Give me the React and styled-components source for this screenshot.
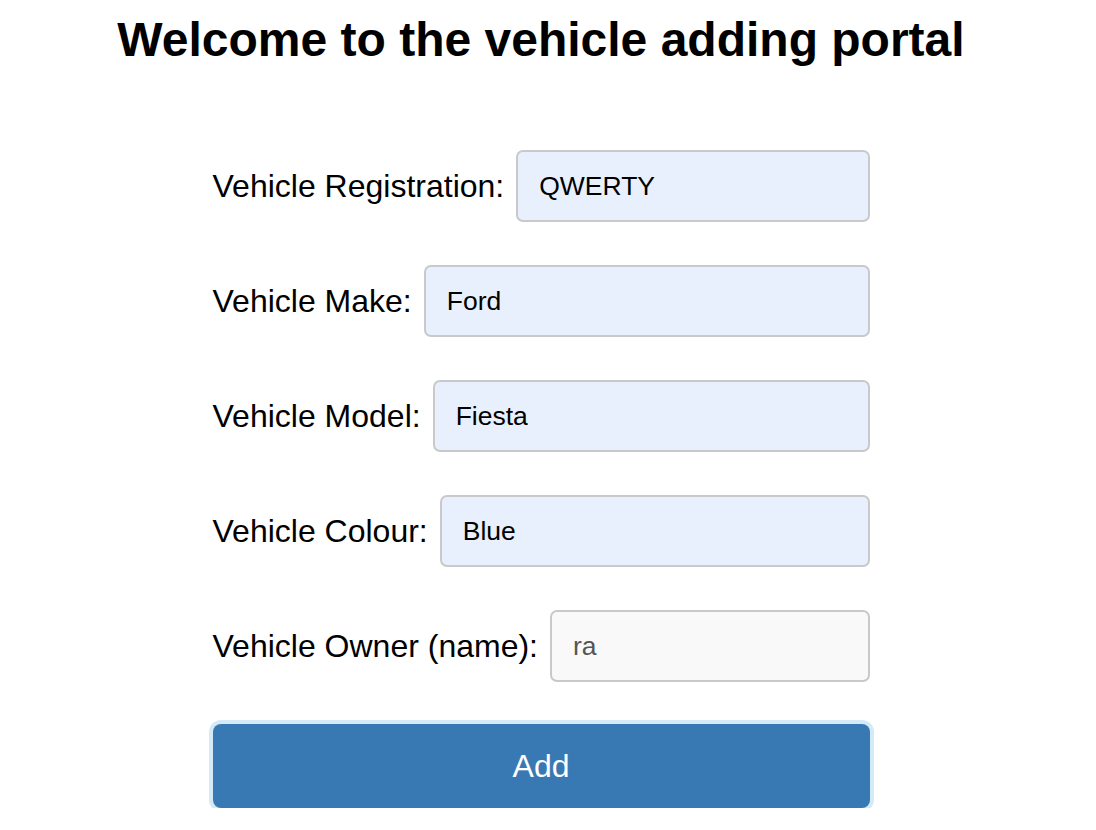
import React, { useState } from 'react';
import styled, { createGlobalStyle } from 'styled-components';

const GlobalStyle = createGlobalStyle`
  body {
    margin: 0;
    background: #ffffff;
    font-family: "Liberation Sans", Arial, sans-serif;
    color: #000;
  }
`;

const Page = styled.div`
  width: 1082px;
  display: flex;
  flex-direction: column;
  align-items: center;
`;

const Title = styled.h1`
  margin: 13px 0 0;
  font-size: 48px;
  font-weight: bold;
  line-height: 54px;
`;

const Form = styled.form`
  width: 657px;
  margin-top: 83px;
  display: flex;
  flex-direction: column;
  gap: 43px;
`;

const Row = styled.div`
  display: flex;
  align-items: center;
  gap: 12px;
`;

const Label = styled.label`
  font-size: 32px;
  white-space: nowrap;
`;

const Input = styled.input`
  flex: 1;
  min-width: 0;
  height: 72px;
  box-sizing: border-box;
  padding: 0 21px;
  border: 2px solid #c9c9cc;
  border-radius: 7px;
  background: ${(p) => (p.$filled ? '#e8f0fe' : '#f9f9f9')};
  color: ${(p) => (p.$filled ? '#000' : '#555')};
  font-family: "Liberation Sans", Arial, sans-serif;
  font-size: 26.5px;
  outline: none;
`;

const Button = styled.button`
  height: 84px;
  margin-top: -1px;
  border: none;
  border-radius: 8px;
  background: #3879b4;
  color: #fff;
  font-family: "Liberation Sans", Arial, sans-serif;
  font-size: 32px;
  box-shadow: 0 0 0 4px #d4ebf7;
  cursor: pointer;
`;

const fields = [
  { id: 'reg', label: 'Vehicle Registration:', value: 'QWERTY', filled: true },
  { id: 'make', label: 'Vehicle Make:', value: 'Ford', filled: true },
  { id: 'model', label: 'Vehicle Model:', value: 'Fiesta', filled: true },
  { id: 'colour', label: 'Vehicle Colour:', value: 'Blue', filled: true },
  { id: 'owner', label: 'Vehicle Owner (name):', value: 'ra', filled: false },
];

const App = () => {
  const [values, setValues] = useState(
    Object.fromEntries(fields.map((f) => [f.id, f.value]))
  );

  return (
    <Page>
      <GlobalStyle />
      <Title>Welcome to the vehicle adding portal</Title>
      <Form onSubmit={(e) => e.preventDefault()}>
        {fields.map((f) => (
          <Row key={f.id}>
            <Label htmlFor={f.id}>{f.label}</Label>
            <Input
              id={f.id}
              $filled={f.filled}
              value={values[f.id]}
              onChange={(e) => setValues({ ...values, [f.id]: e.target.value })}
            />
          </Row>
        ))}
        <Button type="submit">Add</Button>
      </Form>
    </Page>
  );
};

export default App;
